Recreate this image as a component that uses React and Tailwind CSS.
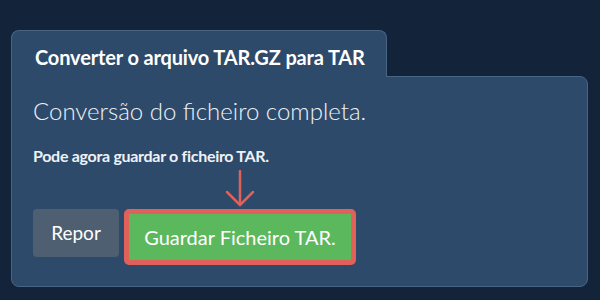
const App = () => {
    return (
        <div className="w-[600px] h-[300px] bg-[#12233a] pt-[30px] pl-[11px] pr-[12px] font-['Lato',sans-serif]">
            {/* Tab */}
            <div className="relative z-10 -mb-px w-[376px] h-[47px] rounded-t-lg border border-b-0 border-[#4a6584] bg-[#2e4a6b] pl-[23px] pt-[12px]">
                <h2 className="text-[20px] leading-[28px] font-bold text-white tracking-[-0.15px]">
                    Converter o arquivo TAR.GZ para TAR
                </h2>
            </div>

            {/* Panel */}
            <div className="h-[211px] rounded-b-lg rounded-tr-lg border border-[#4a6584] bg-[#2e4a6b] pl-[21px] pt-[18px]">
                <p className="text-[24px] font-light text-[#eef2f6] leading-[32px]">
                    Conversão do ficheiro completa.
                </p>
                <p className="mt-[19px] text-[16px] leading-[20px] font-bold text-[#eef2f6] tracking-[-0.3px]">
                    Pode agora guardar o ficheiro TAR.
                </p>
                <div className="flex items-start gap-[5px] mt-[43px]">
                    <button className="w-[86px] h-[48px] rounded-[4px] bg-[#4e5f71] text-[19px] text-white">
                        Repor
                    </button>
                    <div className="relative">
                        <svg
                            className="absolute left-[101px] -top-[39px]"
                            width="30"
                            height="38"
                            viewBox="0 0 30 38"
                            fill="none"
                            stroke="#e0605a"
                            strokeWidth="2.5"
                            strokeLinecap="round"
                            strokeLinejoin="round"
                        >
                            <path d="M15 1 L15 35" />
                            <path d="M2 22 L15 35 L28 22" />
                        </svg>
                        <button className="w-[232px] h-[56px] rounded-[5px] border-[5px] border-[#e0605a] bg-[#5cb85c] text-[20px] text-white">
                            Guardar Ficheiro TAR.
                        </button>
                    </div>
                </div>
            </div>
        </div>
    );
};

export default App;
